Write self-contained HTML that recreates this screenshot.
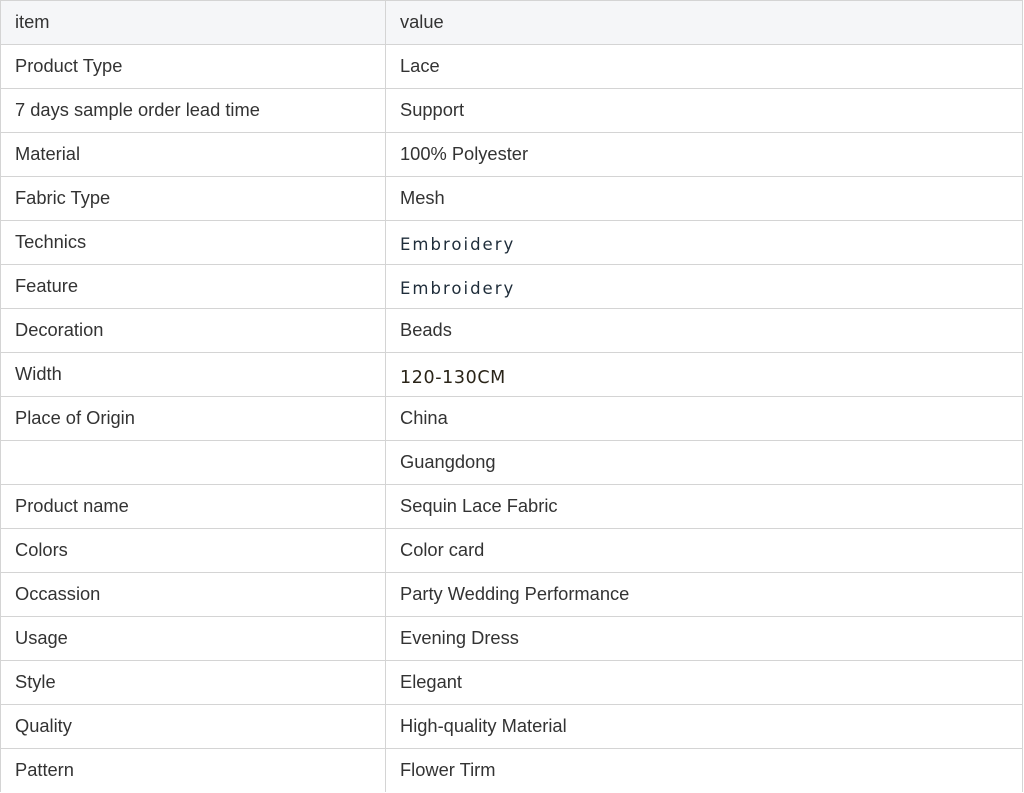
<!DOCTYPE html>
<html><head><meta charset="utf-8"><style>
body{margin:0;background:#fff;font-family:"Liberation Sans",Arial,sans-serif;overflow:hidden;}
.r{position:absolute;left:0;width:1021px;height:43px;border-top:1px solid #d4d4d4;border-left:1px solid #d4d4d4;border-right:1px solid #d4d4d4;}
.r.h{background:#f5f6f8;}
.a,.b{position:absolute;top:-1px;height:43px;line-height:43px;font-size:18.3px;color:#333;white-space:nowrap;}
.a{left:14px;}
.b{left:399px;}
.d{position:absolute;left:384px;top:0;width:1px;height:100%;background:#d4d4d4;}
.e{font-family:"DejaVu Sans",sans-serif;font-size:16.5px;letter-spacing:2px;color:#1f2d3a;top:2px;}
.c{font-family:"DejaVu Sans",sans-serif;font-size:17.5px;letter-spacing:0.6px;color:#2a2418;top:4px;}
</style></head><body>
<div class="r h" style="top:0"><div class="a">item</div><div class="b">value</div><div class="d"></div></div>
<div class="r" style="top:44px"><div class="a">Product Type</div><div class="b">Lace</div><div class="d"></div></div>
<div class="r" style="top:88px"><div class="a">7 days sample order lead time</div><div class="b">Support</div><div class="d"></div></div>
<div class="r" style="top:132px"><div class="a">Material</div><div class="b">100% Polyester</div><div class="d"></div></div>
<div class="r" style="top:176px"><div class="a">Fabric Type</div><div class="b">Mesh</div><div class="d"></div></div>
<div class="r" style="top:220px"><div class="a">Technics</div><div class="b e">Embroidery</div><div class="d"></div></div>
<div class="r" style="top:264px"><div class="a">Feature</div><div class="b e">Embroidery</div><div class="d"></div></div>
<div class="r" style="top:308px"><div class="a">Decoration</div><div class="b">Beads</div><div class="d"></div></div>
<div class="r" style="top:352px"><div class="a">Width</div><div class="b c">120-130CM</div><div class="d"></div></div>
<div class="r" style="top:396px"><div class="a">Place of Origin</div><div class="b">China</div><div class="d"></div></div>
<div class="r" style="top:440px"><div class="b">Guangdong</div><div class="d"></div></div>
<div class="r" style="top:484px"><div class="a">Product name</div><div class="b">Sequin Lace Fabric</div><div class="d"></div></div>
<div class="r" style="top:528px"><div class="a">Colors</div><div class="b">Color card</div><div class="d"></div></div>
<div class="r" style="top:572px"><div class="a">Occassion</div><div class="b">Party Wedding Performance</div><div class="d"></div></div>
<div class="r" style="top:616px"><div class="a">Usage</div><div class="b">Evening Dress</div><div class="d"></div></div>
<div class="r" style="top:660px"><div class="a">Style</div><div class="b">Elegant</div><div class="d"></div></div>
<div class="r" style="top:704px"><div class="a">Quality</div><div class="b">High-quality Material</div><div class="d"></div></div>
<div class="r" style="top:748px"><div class="a">Pattern</div><div class="b">Flower Tirm</div><div class="d"></div></div>
</body></html>
